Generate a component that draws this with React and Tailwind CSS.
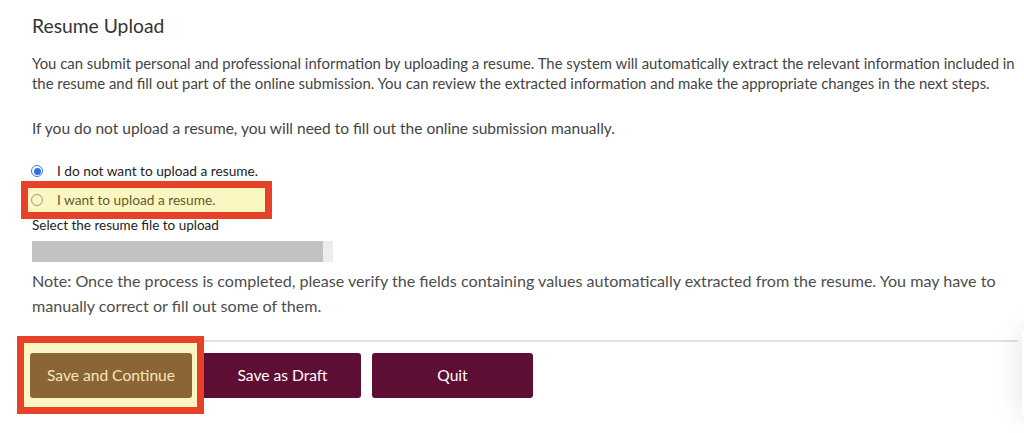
export default function App() {
  const font = { fontFamily: "Lato, 'Open Sans', sans-serif" };
  return (
    <div className="relative w-[1024px] h-[433px] overflow-hidden bg-white" style={font}>
      <div className="pl-[32px] pr-[4px] pt-[14px]">
        <h1 className="text-[19.3px] leading-[24px] text-[#333]">Resume Upload</h1>
        <p className="mt-[15px] whitespace-nowrap text-[14.9px] leading-[20px] text-[#444]">
          You can submit personal and professional information by uploading a resume. The system will automatically extract the relevant information included in
          <br />
          the resume and fill out part of the online submission. You can review the extracted information and make the appropriate changes in the next steps.
        </p>
        <p className="mt-[25px] text-[15.5px] leading-[20px] text-[#444]">
          If you do not upload a resume, you will need to fill out the online submission manually.
        </p>

        <div className="mt-[23px] flex h-[20px] items-center">
          <span className="ml-[-1px] flex h-[12px] w-[12px] items-center justify-center rounded-full border border-[#3b7cf0] bg-white">
            <span className="h-[7px] w-[7px] rounded-full bg-[#2f6fea]" />
          </span>
          <span className="ml-[14px] text-[13.7px] text-[#222]">I do not want to upload a resume.</span>
        </div>

        <div className="ml-[-11px] flex h-[38px] w-[251px] items-center border-[7px] border-[#e8412a] bg-[#fbf6c2]">
          <span className="ml-[3px] h-[12px] w-[12px] rounded-full border border-[#9a9a80]" />
          <span className="ml-[14px] text-[13.7px] text-[#5f5d2e]">I want to upload a resume.</span>
        </div>

        <div className="mt-[-2px] text-[13.5px] leading-[16px] text-[#222]">Select the resume file to upload</div>

        <div className="mt-[8px] flex h-[21px] w-[301px]">
          <div className="w-[291px] bg-[#c2c2c2]" />
          <div className="w-[10px] bg-[#ededed]" />
        </div>

        <p className="mt-[6px] whitespace-nowrap text-[16.1px] leading-[25px] text-[#4d4d4d]">
          Note: Once the process is completed, please verify the fields containing values automatically extracted from the resume. You may have to
          <br />
          manually correct or fill out some of them.
        </p>

        <div className="ml-[-15px] mr-[2px] mt-[22px] border-t-2 border-[#e2e2e2]" />

        <div className="ml-[-15px] mt-[-6px] flex items-start">
          <div className="relative z-10 border-[7px] border-[#e8412a] bg-[#fbf6c2] pl-[6px] pr-[5px] pt-[10px] pb-[9px]">
            <button className="h-[45px] w-[162px] rounded-[3px] bg-[#8b6538] text-[15.6px] text-[#f6e7b8]" style={font}>
              Save and Continue
            </button>
          </div>
          <button className="mt-[17px] h-[45px] w-[157px] rounded-r-[3px] bg-[#5e0e34] text-[15.6px] text-white" style={font}>
            Save as Draft
          </button>
          <button className="ml-[11px] mt-[17px] h-[45px] w-[161px] rounded-[3px] bg-[#5e0e34] text-[15.6px] text-white" style={font}>
            Quit
          </button>
        </div>
      </div>
      <div className="absolute left-[1022px] top-[330px] h-[85px] w-[30px] bg-white shadow-[0_0_30px_rgba(0,0,0,0.12)]" />
    </div>
  );
}
